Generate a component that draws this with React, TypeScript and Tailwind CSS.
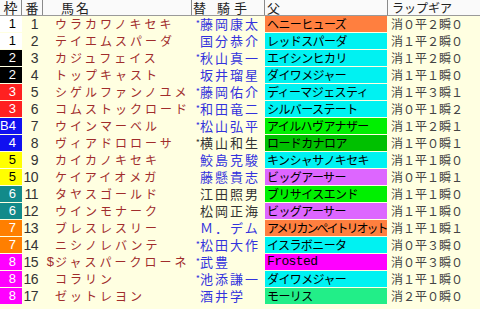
const JP = "font-['Noto_Sans_CJK_JP',sans-serif]";

type Row = {
  waku: string;
  ban: number;
  mark?: string;
  name: string;
  star: boolean;
  jockey: string;
  jockeyBlack?: boolean;
  sire: string;
  sireBg: string;
  sireTight?: boolean;
  lap: string;
};

const wakuStyle: Record<string, string> = {
  "1": "bg-white text-black",
  "2": "bg-black text-white",
  "3": "bg-[#ff2020] text-white",
  "4": "bg-[#1010f0] text-white",
  "5": "bg-[#ffff00] text-black",
  "6": "bg-[#128a8a] text-white",
  "7": "bg-[#ff7f00] text-white",
  "8": "bg-[#ff00ff] text-white",
};

const orange = "bg-[#ff7f3f]";
const cyan = "bg-[#00f2f2]";
const green = "bg-[#00f000]";
const dgreen = "bg-[#00c000]";
const violet = "bg-[#dd66ff]";
const magenta = "bg-[#ff00ff]";
const mint = "bg-[#22ee88]";

const rows: Row[] = [
  { waku: "1", ban: 1, name: "ウラカワノキセキ", star: true, jockey: "藤岡康太", sire: "ヘニーヒューズ", sireBg: orange, lap: "消０平２瞬０" },
  { waku: "1", ban: 2, name: "テイエムスパーダ", star: false, jockey: "国分恭介", sire: "レッドスパーダ", sireBg: cyan, lap: "消１平２瞬０" },
  { waku: "2", ban: 3, name: "カジュフェイス", star: true, jockey: "秋山真一", sire: "エイシンヒカリ", sireBg: cyan, lap: "消１平２瞬０" },
  { waku: "2", ban: 4, name: "トップキャスト", star: false, jockey: "坂井瑠星", sire: "ダイワメジャー", sireBg: cyan, lap: "消１平１瞬０" },
  { waku: "3", ban: 5, name: "シゲルファンノユメ", star: true, jockey: "藤岡佑介", sire: "ディーマジェスティ", sireBg: cyan, lap: "消１平３瞬１" },
  { waku: "3", ban: 6, name: "コムストックロード", star: true, jockey: "和田竜二", sire: "シルバーステート", sireBg: cyan, lap: "消０平１瞬２" },
  { waku: "B4", ban: 7, name: "ウインマーベル", star: true, jockey: "松山弘平", sire: "アイルハヴアナザー", sireBg: green, lap: "消１平２瞬１" },
  { waku: "4", ban: 8, name: "ヴィアドロローサ", star: true, jockey: "横山和生", jockeyBlack: true, sire: "ロードカナロア", sireBg: dgreen, lap: "消１平０瞬１" },
  { waku: "5", ban: 9, name: "カイカノキセキ", star: false, jockey: "鮫島克駿", sire: "キンシャサノキセキ", sireBg: cyan, lap: "消１平１瞬０" },
  { waku: "5", ban: 10, name: "ケイアイオメガ", star: false, jockey: "藤懸貴志", sire: "ビッグアーサー", sireBg: violet, lap: "消０平１瞬１" },
  { waku: "6", ban: 11, name: "タヤスゴールド", star: false, jockey: "江田照男", jockeyBlack: true, sire: "ブリサイスエンド", sireBg: green, lap: "消１平１瞬０" },
  { waku: "6", ban: 12, name: "ウインモナーク", star: false, jockey: "松岡正海", jockeyBlack: true, sire: "ビッグアーサー", sireBg: violet, lap: "消１平１瞬０" },
  { waku: "7", ban: 13, name: "ブレスレスリー", star: false, jockey: "Ｍ．デム", sire: "アメリカンペイトリオット", sireBg: orange, sireTight: true, lap: "消１平１瞬１" },
  { waku: "7", ban: 14, name: "ニシノレバンテ", star: true, jockey: "松田大作", sire: "イスラボニータ", sireBg: cyan, lap: "消０平３瞬０" },
  { waku: "8", ban: 15, mark: "$", name: "ジャスパークローネ", star: true, jockey: "武豊", sire: "Frosted", sireBg: magenta, lap: "消０平３瞬０" },
  { waku: "8", ban: 16, name: "コラリン", star: true, jockey: "池添謙一", sire: "ダイワメジャー", sireBg: cyan, lap: "消１平１瞬０" },
  { waku: "8", ban: 17, name: "ゼットレヨン", star: false, jockey: "酒井学", sire: "モーリス", sireBg: mint, lap: "消２平０瞬０" },
];

function Header() {
  return (
    <div className={`flex h-[16px] bg-[#fafafa] border-b border-[#9a9a9a] text-[#222] leading-[15px] ${JP}`}>
      <div className="w-[22px] flex items-center justify-center text-[14px] border-r border-[#8a8a8a]">枠</div>
      <div className="w-[21px] flex items-center justify-center text-[13px] border-r border-[#8a8a8a]">番</div>
      <div className="w-[149px] flex items-center pl-[18px] text-[13px] tracking-[2px] border-r border-[#8a8a8a]">馬名</div>
      <div className="w-[73px] flex items-center pl-[1px] text-[13px] tracking-[4px] border-r border-[#8a8a8a]">
        替 騎手
      </div>
      <div className="w-[123px] flex items-center pl-[2px] text-[13px] border-r border-[#8a8a8a]">父</div>
      <div className="flex-1 flex items-center pl-[4px] text-[12px]">ラップギア</div>
    </div>
  );
}

function DataRow({ r }: { r: Row }) {
  return (
    <div className="flex h-[17px] leading-[16px]">
      <div className="w-[22px] h-[16px]">
        <div
          className={`h-full flex items-center justify-end pr-[6px] text-[13px] font-['Liberation_Sans',sans-serif] ${wakuStyle[r.waku.replace("B", "")]}`}
        >
          {r.waku}
        </div>
      </div>
      <div className="w-[21px] h-[16px] flex items-center justify-end pr-[5px] text-[14px] text-[#333] font-['Liberation_Sans',sans-serif] tracking-[-0.5px]">
        {r.ban}
      </div>
      <div className={`w-[149px] h-[16px] flex items-center overflow-hidden whitespace-nowrap text-[12px] text-[#a02c2c] ${JP}`}>
        <span className="w-[12px] shrink-0 text-right pr-[1px] font-['Liberation_Sans',sans-serif] text-[13px]">{r.mark}</span>
        <span className="tracking-[3px]">{r.name}</span>
      </div>
      <div
        className={`w-[73px] h-[16px] flex items-center whitespace-nowrap overflow-hidden ${JP} ${
          r.jockeyBlack ? "text-[#333]" : "text-[#3333dd]"
        }`}
      >
        <span className="w-[8px] shrink-0 text-[9px] text-right">{r.star ? "*" : ""}</span>
        <span className="text-[13px] tracking-[2px]">{r.jockey}</span>
      </div>
      <div className="w-[123px] h-[16px] pr-[1px]">
        <div
          className={`h-full flex items-center pl-[2px] overflow-hidden whitespace-nowrap text-[12px] text-black ${r.sireBg} ${
            r.sire === "Frosted" ? "font-['Liberation_Mono',monospace] text-[13px]" : JP
          } ${r.sireTight ? "tracking-[-2px]" : "tracking-[-0.6px]"}`}
        >
          {r.sire}
        </div>
      </div>
      <div className={`flex-1 h-[16px] flex items-center pl-[3px] text-[12px] text-[#444] whitespace-nowrap ${JP}`}>
        {r.lap}
      </div>
    </div>
  );
}

export default function App() {
  return (
    <div className="w-[480px] h-[309px] bg-[#ffffe1] overflow-hidden">
      <Header />
      {rows.map((r) => (
        <DataRow key={r.ban} r={r} />
      ))}
    </div>
  );
}
